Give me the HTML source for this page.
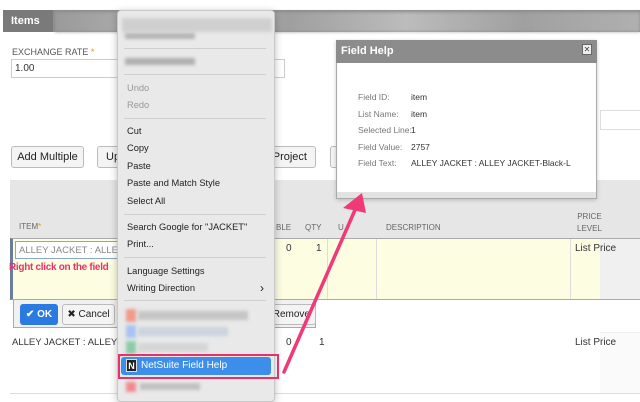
<!DOCTYPE html>
<html><head><style>
*{margin:0;padding:0;box-sizing:border-box}
body{width:640px;height:400px;overflow:hidden;background:#fff;font-family:"Liberation Sans",sans-serif;position:relative;color:#333}
.a{position:absolute}
.t{font-size:10px;white-space:nowrap}
.btn{position:absolute;border:1px solid #bbb;border-radius:3px;background:#f4f4f4;font-size:11px;text-align:center;line-height:20px;color:#222}
.mi{position:absolute;left:127px;font-size:9.3px;color:#222;white-space:nowrap}
.sep{position:absolute;left:124px;width:142px;height:1px;background:#cfcfcf}
.blur{position:absolute;filter:blur(1.5px)}
</style></head><body>
<!-- top bar -->
<div class="a" style="left:3px;top:10px;width:637px;height:22px;background:#8c8c8c"></div>
<div class="a blur" style="left:55px;top:12px;width:585px;height:20px;background:linear-gradient(90deg,#9a9a9a,#b5b5b5 20%,#9f9f9f 40%,#bcbcbc 60%,#a0a0a0 80%,#b0b0b0)"></div>
<div class="a" style="left:3px;top:10px;width:50px;height:22px;background:#7a7a7a;color:#fff;font-weight:bold;font-size:11px;padding:5px 8px">Items</div>
<div class="a t" style="left:12px;top:47px;font-size:9px;color:#555">EXCHANGE RATE <span style="color:#e0a000">*</span></div>
<div class="a" style="left:11px;top:59px;width:274px;height:19px;border:1px solid #ccc;font-size:10px;padding:3px 3px">1.00</div>
<div class="a" style="left:600px;top:110px;width:40px;height:20px;border:1px solid #ddd;border-right:none"></div>
<!-- buttons -->
<div class="btn" style="left:11px;top:146px;width:73px;height:22px">Add Multiple</div>
<div class="btn" style="left:97px;top:146px;width:40px;height:22px;text-align:left;padding-left:8px">Up</div>
<div class="btn" style="left:262px;top:146px;width:54px;height:22px;text-align:right;padding-right:8px">Project</div>
<div class="btn" style="left:330px;top:146px;width:20px;height:22px"></div>
<!-- table header -->
<div class="a" style="left:10px;top:180px;width:630px;height:58px;background:#e6e6e6"></div>
<div class="a t" style="left:19px;top:222px;font-size:8px;color:#666">ITEM<span style="color:#e0a000">*</span></div>
<div class="a t" style="left:276px;top:223px;font-size:8px;color:#666">BLE</div>
<div class="a t" style="left:305px;top:223px;font-size:8px;color:#666">QTY</div>
<div class="a t" style="left:338px;top:223px;font-size:8px;color:#666">U</div>
<div class="a t" style="left:386px;top:223px;font-size:8px;color:#666">DESCRIPTION</div>
<div class="a t" style="left:577px;top:211px;font-size:8px;color:#666;text-align:center;line-height:12px">PRICE<br>LEVEL</div>
<!-- yellow row -->
<div class="a" style="left:10px;top:238px;width:290px;height:62px;background:#fdfde2;border-left:3px solid #6a7d9a;border-top:1px solid #aaa;border-bottom:1px solid #aaa"></div>
<div class="a" style="left:300px;top:238px;width:300px;height:62px;background:#fdfde2;border-top:1px solid #aaa;border-bottom:1px solid #aaa"></div>
<div class="a" style="left:600px;top:238px;width:40px;height:62px;background:#f0f0f0;border-top:1px solid #aaa;border-bottom:1px solid #aaa"></div>
<div class="a" style="left:327px;top:239px;width:1px;height:60px;background:#ddd"></div>
<div class="a" style="left:376px;top:239px;width:1px;height:60px;background:#ddd"></div>
<div class="a" style="left:570px;top:239px;width:1px;height:60px;background:#ddd"></div>
<div class="a" style="left:15px;top:241px;width:105px;height:18px;border:1px solid #8ab;background:#fff;font-size:9.5px;color:#888;padding:3px 3px;white-space:nowrap;overflow:hidden">ALLEY JACKET : ALLEY <span style="background:#b8d2f2">JAC</span></div>
<div class="a t" style="left:286px;top:243px">0</div>
<div class="a t" style="left:316px;top:243px">1</div>
<div class="a t" style="left:575px;top:243px;font-size:10px">List Price</div>
<div class="a t" style="left:9px;top:262px;font-size:10px;font-weight:bold;color:#e8306a;letter-spacing:-0.3px">Right click on the field</div>
<!-- ok/cancel bar -->
<div class="a" style="left:13px;top:300px;width:303px;height:28px;background:#f1f1f1;border:1px solid #aaa;border-top:none"></div>
<div class="a" style="left:20px;top:304px;width:38px;height:21px;background:#2a7ae2;border-radius:3px;color:#fff;font-size:10px;font-weight:bold;line-height:21px;text-align:center">✔ OK</div>
<div class="btn" style="left:62px;top:304px;width:53px;height:21px;font-size:10px">✖ Cancel</div>
<div class="btn" style="left:262px;top:304px;width:54px;height:21px;font-size:10px;text-align:right;padding-right:5px">Remove</div>
<!-- row 2 -->
<div class="a" style="left:600px;top:332px;width:40px;height:62px;background:#fafafa;border-top:1px solid #eee"></div>
<div class="a" style="left:10px;top:393px;width:630px;height:1px;background:#ddd"></div>
<div class="a t" style="left:12px;top:337px;font-size:9.5px">ALLEY JACKET : ALLEY JACKE</div>
<div class="a t" style="left:286px;top:337px">0</div>
<div class="a t" style="left:319px;top:337px">1</div>
<div class="a t" style="left:575px;top:337px;font-size:10px">List Price</div>
<!-- context menu -->
<div class="a" style="left:117px;top:10px;width:158px;height:392px;background:#e9e9e9;border:1px solid #c8c8c8;border-radius:4px;box-shadow:0 2px 8px rgba(0,0,0,.25)"></div>
<div class="blur" style="left:122px;top:18px;width:150px;height:14px;background:#cfcfcf"></div>
<div class="blur" style="left:125px;top:33px;width:70px;height:6px;background:#b5b5b5"></div>
<div class="sep" style="top:48px"></div>
<div class="blur" style="left:125px;top:58px;width:70px;height:7px;background:#b0b0b0"></div>
<div class="sep" style="top:74px"></div>
<div class="mi" style="top:83px;color:#999">Undo</div>
<div class="mi" style="top:100px;color:#999">Redo</div>
<div class="sep" style="top:118px"></div>
<div class="mi" style="top:126px">Cut</div>
<div class="mi" style="top:143px">Copy</div>
<div class="mi" style="top:161px">Paste</div>
<div class="mi" style="top:178px">Paste and Match Style</div>
<div class="mi" style="top:196px">Select All</div>
<div class="sep" style="top:214px"></div>
<div class="mi" style="top:222px">Search Google for "JACKET"</div>
<div class="mi" style="top:239px">Print...</div>
<div class="sep" style="top:257px"></div>
<div class="mi" style="top:266px">Language Settings</div>
<div class="mi" style="top:283px">Writing Direction</div>
<div class="mi" style="top:281px;left:260px;font-size:12px">›</div>
<div class="sep" style="top:300px"></div>
<div class="blur" style="left:126px;top:309px;width:10px;height:13px;background:#f09a8a"></div>
<div class="blur" style="left:138px;top:311px;width:110px;height:9px;background:#c5c5c5"></div>
<div class="blur" style="left:126px;top:325px;width:10px;height:13px;background:#a8c4f2"></div>
<div class="blur" style="left:138px;top:327px;width:90px;height:9px;background:#cdd3dd"></div>
<div class="blur" style="left:126px;top:341px;width:10px;height:13px;background:#8ccca8"></div>
<div class="blur" style="left:138px;top:343px;width:70px;height:9px;background:#d5d5d5"></div>
<div class="a" style="left:118px;top:354px;width:161px;height:25px;border:2px solid #e8306a"></div>
<div class="a" style="left:121px;top:357px;width:150px;height:18px;background:#3d8eea;border-radius:3px"></div>
<div class="a" style="left:126px;top:359px;width:11px;height:13px;background:#222;color:#fff;font-size:9px;font-weight:bold;line-height:13px;text-align:center;border:1px solid #ddd">N</div>
<div class="a t" style="left:141px;top:360px;color:#fff;font-size:10px">NetSuite Field Help</div>
<div class="blur" style="left:126px;top:382px;width:10px;height:10px;background:#f08a8a"></div>
<div class="blur" style="left:140px;top:383px;width:60px;height:7px;background:#c0c0c0"></div>
<!-- dialog -->
<div class="a" style="left:336px;top:40px;width:261px;height:159px;background:#fff;border:1px solid #aaa;box-shadow:0 1px 4px rgba(0,0,0,.2)"></div>
<div class="a" style="left:336px;top:40px;width:261px;height:23px;background:#8c8c8c;color:#fff;font-weight:bold;font-size:11px;padding:5px 5px">Field Help</div>
<div class="a" style="left:582px;top:44px;width:10px;height:11px;background:#eee;border:1px solid #666;font-size:8px;line-height:9px;text-align:center;color:#444">✕</div>
<div class="a" style="left:337px;top:192px;width:259px;height:6px;background:#e2e2e2"></div>
<div class="a t" style="left:358px;top:89px;font-size:8.5px;color:#777;line-height:16.5px">Field ID:<br>List Name:<br>Selected Line:<br>Field Value:<br>Field Text:</div>
<div class="a t" style="left:411px;top:89px;font-size:8.5px;color:#333;line-height:16.5px">item<br>item<br>1<br>2757<br>ALLEY JACKET : ALLEY JACKET-Black-L</div>
<!-- arrow -->
<svg class="a" style="left:0;top:0" width="640" height="400"><line x1="284" y1="372" x2="355" y2="210" stroke="#f03a78" stroke-width="3.5" stroke-linecap="round"/><polygon points="362,193 343,208 366,213" fill="#f03a78"/></svg>
</body></html>
